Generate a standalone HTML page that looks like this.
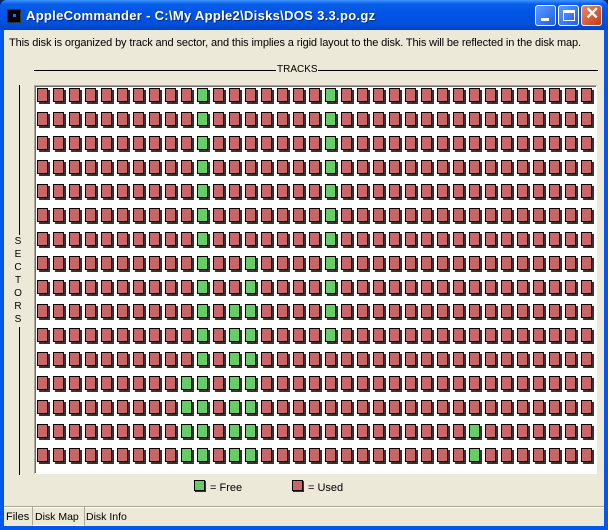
<!DOCTYPE html>
<html><head><style>
*{margin:0;padding:0;box-sizing:border-box}
body{width:608px;height:530px;overflow:hidden;background:#0a246a;font-family:"Liberation Sans",sans-serif;font-size:11px;position:relative}
#win{position:absolute;left:0;top:0;width:608px;height:530px;background:#0058ee;border-radius:7px 7px 0 0}
#title{position:absolute;left:0;top:0;width:608px;height:30px;background:linear-gradient(#3d95ff 0,#0a5fe8 4px,#0055e5 12px,#0050dd 24px,#0042c2 30px);border-radius:7px 7px 0 0}
#title .t{position:absolute;left:26px;top:8px;color:#fff;font-weight:bold;font-size:13px;font-family:"Liberation Sans",sans-serif;text-shadow:1px 1px #0a2a80;letter-spacing:0.3px}
#ico{position:absolute;left:7px;top:9px;width:14px;height:14px;background:#000;border:1px solid #333}
#ico:after{content:"";position:absolute;left:5px;top:4px;width:3px;height:3px;background:#2a6aff}
.btn{position:absolute;top:5px;width:21px;height:21px;border:1px solid #fff;border-radius:3px;background:linear-gradient(135deg,#5d9bff,#2060e8)}
#client{position:absolute;left:4px;top:30px;width:600px;height:496px;background:#ece9d8}
.desc{position:absolute;left:5px;top:7px;color:#000;font-size:11px;white-space:nowrap;letter-spacing:-0.12px}
#panel{position:absolute;left:30px;top:55px;width:563px;height:389px;background:#fff;border:1px solid #aca899;border-right-color:#fff;border-bottom-color:#fff;box-shadow:inset 1px 1px #716f64}
.c{position:absolute;width:11px;height:14px;background:#cc6666;border:1px solid #000;box-shadow:2px 2px 0 #333}
.g{background:#66cc66}
</style></head><body>
<div id="win">
<div id="title"><div id="ico"></div><div class="t">AppleCommander - C:\My Apple2\Disks\DOS 3.3.po.gz</div>
<div class="btn" style="left:535px"><div style="position:absolute;left:5px;top:12px;width:8px;height:3px;background:#fff"></div></div>
<div class="btn" style="left:558px"><div style="position:absolute;left:4px;top:4px;width:12px;height:11px;border:1px solid #fff;border-top-width:3px"></div></div>
<div class="btn" style="left:581px;background:linear-gradient(135deg,#e88a6a,#c83a12)"><div style="position:absolute;left:3px;top:-2px;color:#fff;font-size:17px;font-weight:bold;font-family:'Liberation Sans',sans-serif">✕</div></div>
</div>
<div id="client">
<div class="desc">This disk is organized by track and sector, and this implies a rigid layout to the disk. This will be reflected in the disk map.</div>
<div style="position:absolute;left:30px;top:40px;width:242px;height:1px;background:#000"></div>
<div style="position:absolute;left:273px;top:34px;font-size:10px">TRACKS</div>
<div style="position:absolute;left:314px;top:40px;width:280px;height:1px;background:#000"></div>
<div style="position:absolute;left:15px;top:55px;width:1px;height:150px;background:#000"></div>
<div style="position:absolute;left:9px;top:205px;width:10px;font-size:10px;line-height:13px;text-align:center">S<br>E<br>C<br>T<br>O<br>R<br>S</div>
<div style="position:absolute;left:15px;top:297px;width:1px;height:148px;background:#000"></div>
<div id="panel"></div>
<div style="position:absolute;left:190px;top:450px;width:11px;height:11px;background:#66cc66;border:1px solid #000;box-shadow:1px 1px 0 #333"></div>
<div style="position:absolute;left:206px;top:452px">= Free</div>
<div style="position:absolute;left:288px;top:450px;width:11px;height:11px;background:#cc6666;border:1px solid #000;box-shadow:1px 1px 0 #333"></div>
<div style="position:absolute;left:304px;top:452px">= Used</div>
<div style="position:absolute;left:0;top:476px;width:600px;height:1px;background:#aca899"></div>
<div style="position:absolute;left:0;top:477px;width:600px;height:1px;background:#fff"></div>
<div style="position:absolute;left:2px;top:481px">Files</div>
<div style="position:absolute;left:28px;top:477px;width:53px;height:19px;border:1px solid #fff;border-top:none;border-right-color:#aca899;border-left-color:#aca899"></div>
<div style="position:absolute;left:31px;top:481px;font-size:10.5px">Disk Map</div>
<div style="position:absolute;left:82px;top:481px;font-size:10.5px">Disk Info</div>
</div>
</div>
<div id="cells"></div>
<script>
var free={0:[10,18],1:[10,18],2:[10,18],3:[10,18],4:[10,18],5:[10,18],6:[10,18],7:[10,13,18],8:[10,13,18],9:[10,12,13,18],10:[10,12,13,18],11:[10,12,13],12:[9,10,12,13],13:[9,10,12,13],14:[9,10,12,13,27],15:[9,10,12,13,27]};
var h='';
for(var r=0;r<16;r++)for(var i=0;i<35;i++){
var g=free[r].indexOf(i)>=0;
h+='<div class="c'+(g?' g':'')+'" style="left:'+(37+16*i)+'px;top:'+(88+24*r)+'px"></div>';}
document.getElementById('cells').innerHTML=h;
</script>
</body></html>
